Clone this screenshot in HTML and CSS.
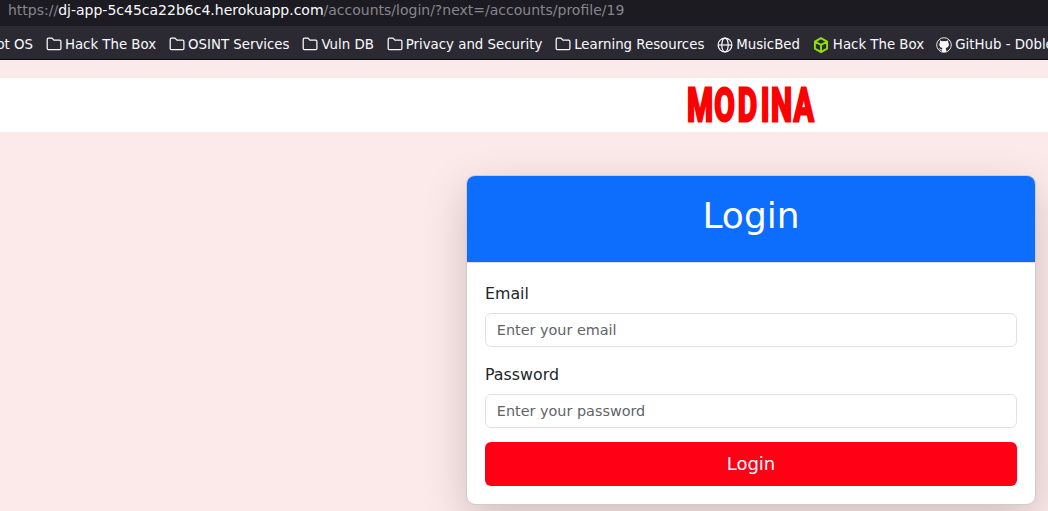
FILE: index.html
```html
<!DOCTYPE html>
<html lang="en">
<head>
<meta charset="utf-8">
<title>Login</title>
<link rel="stylesheet" href="styles.css">
</head>
<body>
<svg width="0" height="0" class="defs">
  <symbol id="folder" viewBox="0 0 16 16"><path d="M1.2 3.4q0-1.2 1.2-1.2h3.2q.7 0 1.2.6l.8 1q.3.4.9.4h5.2q1.2 0 1.2 1.2v7.1q0 1.2-1.2 1.2H2.400q-1.200 0-1.200-1.200z" fill="none" stroke="currentColor" stroke-width="1.250"/></symbol>
</svg>
<div class="url"><span class="dim">https://</span>dj-app-5c45ca22b6c4.herokuapp.com<span class="dim">/accounts/login/?next=/accounts/profile/19</span></div>
<nav class="bookmarks">
  <span class="mark cut">ot OS</span>
  <span class="mark"><svg class="icon"><use href="#folder"/></svg>Hack The Box</span>
  <span class="mark"><svg class="icon"><use href="#folder"/></svg>OSINT Services</span>
  <span class="mark"><svg class="icon"><use href="#folder"/></svg>Vuln DB</span>
  <span class="mark"><svg class="icon"><use href="#folder"/></svg>Privacy and Security</span>
  <span class="mark"><svg class="icon"><use href="#folder"/></svg>Learning Resources</span>
  <span class="mark"><svg class="icon site" viewBox="0 0 16 16" fill="none" stroke="currentColor" stroke-width="1.200"><circle cx="8" cy="8" r="6.900"/><ellipse cx="8" cy="8" rx="3.200" ry="6.900"/><path d="M1.200 8h13.600"/></svg>MusicBed</span>
  <span class="mark htb"><svg class="icon site green" viewBox="0 0 16 16" fill="none" stroke="currentColor" stroke-width="1.900" stroke-linejoin="round"><path d="M8 1.100l6.100 3.500v7L8 15.100l-6.100-3.500v-7zM2.500 5L8 7.900 13.500 5M8 7.900v6"/></svg>Hack The Box</span>
  <span class="mark last"><svg class="icon site" viewBox="0 0 16 16"><circle cx="8" cy="8" r="7.300" fill="none" stroke="currentColor" stroke-width=".9"/><path d="M4 3.300l2 1q2-.5 4 0l2-1q.5 1 .2 2.200 1 1.200.6 2.900-.5 2.200-3.100 2.500.5.600.5 1.500v2.500H5.900v-1.600q-1.900.3-2.500-1.300l-.7-.8q1-.2 1.600.8.700.8 1.700.4 0-.9.500-1.500-2.700-.3-3.100-2.500-.4-1.700.6-2.900-.4-1.200 0-2.200z" fill="currentColor"/></svg>GitHub - D0bledore</span>
</nav>
<div class="page">
  <header class="brandbar">
    <svg class="brand" viewBox="0 0 130 40"><text transform="scale(.64 1)" y="35.300" x="0 42.600 79.200 115.200 131.200 167">MODINA</text></svg>
  </header>
  <main class="card">
    <h1 class="title">Login</h1>
    <form class="form">
      <label class="label" for="email">Email</label>
      <input class="field" id="email" type="email" placeholder="Enter your email">
      <label class="label" for="password">Password</label>
      <input class="field" id="password" type="password" placeholder="Enter your password">
      <button class="submit" type="button">Login</button>
    </form>
  </main>
</div>
</body>
</html>
```
FILE: styles.css
```css
* { box-sizing: border-box; }
body {
  margin: 0;
  height: 511px;
  overflow: hidden;
  background: #fce9e9;
  color: #212529;
  font-family: "DejaVu Sans", sans-serif;
}
.defs { display: block; height: 0; }
.url {
  height: 26px;
  padding-left: 8px;
  background: #1c1b22;
  color: #fbfbfe;
  font-size: 14px;
  line-height: 21px;
  white-space: nowrap;
}
.dim { color: #87868c; }
.bookmarks {
  display: flex;
  align-items: center;
  gap: 12.900px;
  height: 34px;
  padding-top: 3px;
  border-bottom: 1px solid #0c0c0d;
  background: #2b2a33;
  color: #fbfbfe;
  font-size: 13.333px;
  white-space: nowrap;
  overflow: hidden;
}
.mark { display: flex; flex: none; align-items: center; gap: 3px; }
.cut { margin-left: -3.600px; }
.htb { gap: 4px; }
.last { margin-left: -.800px; }
.icon { width: 16px; height: 16px; flex: none; }
.site { margin-top: 1px; }
.green { color: #8fe00b; }
.page { padding-top: 18px; }
.brandbar {
  height: 54px;
  padding: 8px 0 0 687px;
  background: #fff;
}
.brand { display: block; width: 130px; height: 40px; overflow: visible; }
.brand text {
  font-family: Roboto, sans-serif;
  font-size: 46.500px;
  font-weight: 700;
  fill: #f00;
  stroke: #f00;
  stroke-width: 2.800px;
}
.card {
  width: 570px;
  height: 330px;
  margin: 43px 0 0 466px;
  border: 1px solid #cfcccd;
  border-radius: 9px;
  background: #fff;
  background-clip: padding-box;
  box-shadow: 0 14.400px 43.200px rgba(0, 0, 0, .175);
  overflow: hidden;
}
.title {
  height: 87px;
  margin: 0;
  border-bottom: 1px solid #dfdfdf;
  background: #0d6efd;
  color: #fff;
  font-size: 36px;
  font-weight: 400;
  line-height: 79px;
  text-align: center;
}
.form { display: flex; flex-direction: column; padding: 18px 18px 0; }
.label { height: 32px; font-size: 15.840px; line-height: 25px; }
.field {
  height: 34px;
  margin: 0 0 15px;
  padding: 0 10.800px;
  border: 1px solid #dee2e6;
  border-radius: 6px;
  font: 14.400px "DejaVu Sans", sans-serif;
}
.field::placeholder { color: #5f6469; opacity: 1; }
.submit {
  height: 44px;
  margin-top: -1px;
  padding: 0 0 1px;
  border: 0;
  border-radius: 6px;
  background: #ff0015;
  color: #fff;
  font: 18px "DejaVu Sans", sans-serif;
}
```
